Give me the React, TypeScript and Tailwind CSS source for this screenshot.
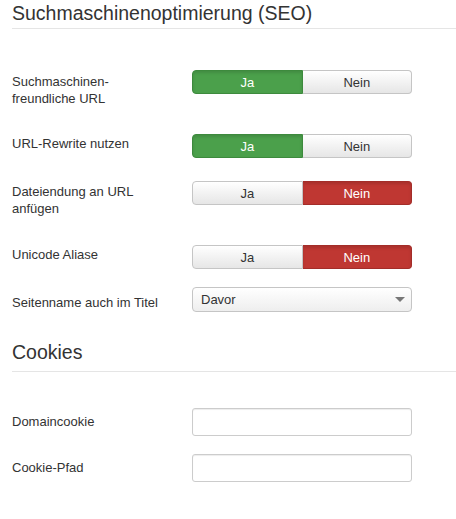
import React from "react";

const Toggle = ({ value }: { value: "ja" | "nein" }) => {
    const off =
        "bg-gradient-to-b from-white to-[#e6e6e6] text-[#333] border-[#c5c5c5]";
    const ja =
        value === "ja"
            ? "bg-[#4ba04b] text-white border-[#3d8a3d] shadow-[inset_0_2px_3px_rgba(0,0,0,0.12)]"
            : off;
    const nein =
        value === "nein"
            ? "bg-[#bf3732] text-white border-[#a32d29] shadow-[inset_0_2px_3px_rgba(0,0,0,0.12)]"
            : off;
    return (
        <div className="flex w-[220px] h-[24px] text-[13px]">
            <button className={`flex-1 flex items-center justify-center border rounded-l-[4px] ${ja}`}>
                Ja
            </button>
            <button className={`flex-1 flex items-center justify-center border border-l-0 rounded-r-[4px] ${nein}`}>
                Nein
            </button>
        </div>
    );
};

const Heading = ({ title, className }: { title: string; className: string }) => (
    <div className={`border-b border-[#e5e5e5] ${className}`}>
        <h2 className="text-[19.5px] leading-6 text-[#333]">{title}</h2>
    </div>
);

export default function App() {
    return (
        <div className="w-[456px] h-[519px] bg-white pl-3 font-['Liberation_Sans',Arial,sans-serif] text-[#333] text-[13px] leading-[17px]">
            <Heading title="Suchmaschinenoptimierung (SEO)" className="pt-[1px] pb-[3px]" />

            <div className="flex items-start mt-[41px] h-[64px]">
                <label className="w-[180px] pt-[3px]">
                    Suchmaschinen-
                    <br />
                    freundliche URL
                </label>
                <Toggle value="ja" />
            </div>

            <div className="flex items-start h-[47px]">
                <label className="w-[180px] pt-[1px]">URL-Rewrite nutzen</label>
                <Toggle value="ja" />
            </div>

            <div className="flex items-start h-[64px]">
                <label className="w-[180px] pt-[2px]">
                    Dateiendung an URL
                    <br />
                    anfügen
                </label>
                <Toggle value="nein" />
            </div>

            <div className="flex items-start h-[42px]">
                <label className="w-[180px] pt-[1px]">Unicode Aliase</label>
                <Toggle value="nein" />
            </div>

            <div className="flex items-start">
                <label className="w-[180px] pt-[7px]">Seitenname auch im Titel</label>
                <div className="w-[220px] h-[25px] flex items-center justify-between pl-2 pr-[6px] border border-[#c5c5c5] rounded-[4px] bg-gradient-to-b from-white to-[#eeeeee]">
                    <span>Davor</span>
                    <span className="w-0 h-0 border-l-[5px] border-r-[5px] border-t-[5px] border-l-transparent border-r-transparent border-t-[#777]" />
                </div>
            </div>

            <Heading title="Cookies" className="mt-[28px] pb-[7px]" />

            <div className="flex items-start mt-[36px] h-[46px]">
                <label className="w-[180px] pt-[5px]">Domaincookie</label>
                <input className="w-[220px] h-[28px] border border-[#ccc] rounded-[3px] shadow-[inset_0_1px_1px_rgba(0,0,0,0.075)] px-2" />
            </div>

            <div className="flex items-start">
                <label className="w-[180px] pt-[5px]">Cookie-Pfad</label>
                <input className="w-[220px] h-[28px] border border-[#ccc] rounded-[3px] shadow-[inset_0_1px_1px_rgba(0,0,0,0.075)] px-2" />
            </div>
        </div>
    );
}
